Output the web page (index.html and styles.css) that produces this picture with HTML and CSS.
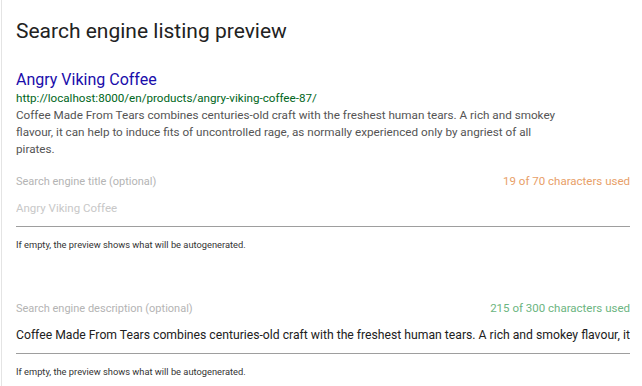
FILE: index.html
```html
<!DOCTYPE html>
<html lang="en">
  <head>
    <meta charset="UTF-8" />
    <meta name="viewport" content="width=device-width, initial-scale=1.0" />
    <title>Search engine listing preview</title>
    <link rel="stylesheet" href="styles.css">
  </head>
  <body>
    <div class="card">
      <h2 class="card-title">Search engine listing preview</h2>

      <!-- Preview -->
      <div class="seo-preview">
        <div class="seo-title">Angry Viking Coffee</div>
        <div class="seo-url">http://localhost:8000/en/products/angry-viking-coffee-87/</div>
        <div class="seo-description">
          Coffee Made From Tears combines centuries-old craft with the freshest human tears. A rich and smokey flavour, it can help to induce fits of uncontrolled rage, as normally experienced only by angriest of all pirates.
        </div>
      </div>

      <!-- Title field -->
      <div class="field">
        <div class="field-head">
          <label class="field-label" for="seo-title">Search engine title (optional)</label>
          <span class="counter counter-warn">19 of 70 characters used</span>
        </div>
        <input id="seo-title" class="field-input" type="text" placeholder="Angry Viking Coffee" />
        <div class="field-help">If empty, the preview shows what will be autogenerated.</div>
      </div>

      <!-- Description field -->
      <div class="field">
        <div class="field-head">
          <label class="field-label" for="seo-desc">Search engine description (optional)</label>
          <span class="counter counter-ok">215 of 300 characters used</span>
        </div>
        <input id="seo-desc" class="field-input" type="text" value="Coffee Made From Tears combines centuries-old craft with the freshest human tears. A rich and smokey flavour, it can help to induce fits of uncontrolled rage, as normally experienced only by angriest of all pirates." />
        <div class="field-help">If empty, the preview shows what will be autogenerated.</div>
      </div>
    </div>
  </body>
</html>
```

FILE: styles.css
```css
/* General Styles */
body {
  margin: 0;
  background: #fff;
  font-family: Roboto, "Liberation Sans", sans-serif;
  color: #212121;
  overflow: hidden;
}

.card {
  border-left: 1px solid #e4e4e4;
  margin-left: 1px;
  padding: 16px 12px 0 14px;
  height: 386px;
  box-sizing: border-box;
}

.card-title {
  margin: 0;
  font-size: 21px;
  font-weight: 400;
  line-height: 30px;
  color: #222;
}

/* Preview */
.seo-preview {
  margin-top: 24px;
  max-width: 548px;
}

.seo-title {
  font-size: 16px;
  line-height: 20px;
  color: #1a0dab;
}

.seo-url {
  font-size: 11.65px;
  line-height: 17px;
  color: #006621;
}

.seo-description {
  font-size: 11.7px;
  line-height: 17px;
  color: #545454;
}

/* Fields */
.field {
  margin-top: 15px;
}

.field + .field {
  margin-top: 49px;
}

.field-head {
  display: flex;
  justify-content: space-between;
  align-items: baseline;
  line-height: 16px;
}

.field-label {
  font-size: 11px;
  color: #b4b4b4;
}

.counter {
  font-size: 11.5px;
}

.counter-warn {
  color: #e8a068;
}

.counter-ok {
  color: #6cb57f;
}

.field-input {
  display: block;
  width: 100%;
  box-sizing: border-box;
  margin-top: 10px;
  padding: 0 0 9px;
  border: none;
  border-bottom: 1px solid #9e9e9e;
  outline: none;
  font-family: inherit;
  font-size: 12.2px;
  line-height: 17px;
  color: #212121;
  background: transparent;
}

.field-input::placeholder {
  font-size: 11.5px;
  color: #c8c8c8;
}

.field-help {
  margin-top: 11px;
  font-size: 9.3px;
  line-height: 13px;
  color: #333;
}
```
